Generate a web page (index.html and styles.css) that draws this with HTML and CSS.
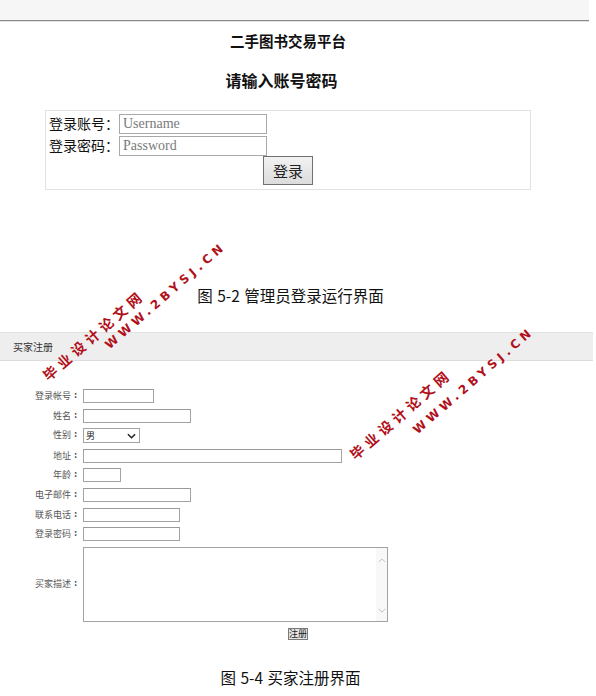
FILE: index.html
```html
<!DOCTYPE html>
<html lang="zh-CN">
<head>
<meta charset="utf-8">
<title>二手图书交易平台</title>
<link rel="stylesheet" href="styles.css">
</head>
<body>
<div class="topbar"></div>
<section class="admin">
  <h1 class="site-title">二手图书交易平台</h1>
  <h2 class="login-title">请输入账号密码</h2>
  <div class="login-box">
    <div class="login-row">
      <span class="login-label">登录账号：</span>
      <input class="login-input" type="text" placeholder="Username">
    </div>
    <div class="login-row">
      <span class="login-label">登录密码：</span>
      <input class="login-input" type="password" placeholder="Password">
    </div>
    <div class="login-btn-row">
      <button class="login-btn" type="button">登录</button>
    </div>
  </div>
</section>
<p class="caption caption-1">图 5-2 管理员登录运行界面</p>

<div class="reg-header">买家注册</div>
<div class="reg-form">
  <label class="reg-label">登录帐号<span class="colon">:</span></label><div class="reg-field"><span class="reg-input w-71"></span></div>
  <label class="reg-label">姓名<span class="colon">:</span></label><div class="reg-field"><span class="reg-input w-108"></span></div>
  <label class="reg-label">性别<span class="colon">:</span></label>
  <div class="reg-field">
    <span class="reg-select">男<svg class="chev" viewBox="0 0 10 6" width="9" height="6"><path d="M1 1 L5 5 L9 1" fill="none" stroke="#222" stroke-width="1.6"/></svg></span>
  </div>
  <label class="reg-label">地址<span class="colon">:</span></label><div class="reg-field"><span class="reg-input w-259"></span></div>
  <label class="reg-label">年龄<span class="colon">:</span></label><div class="reg-field"><span class="reg-input w-38"></span></div>
  <label class="reg-label">电子邮件<span class="colon">:</span></label><div class="reg-field"><span class="reg-input w-108"></span></div>
  <label class="reg-label">联系电话<span class="colon">:</span></label><div class="reg-field"><span class="reg-input w-97"></span></div>
  <label class="reg-label">登录密码<span class="colon">:</span></label><div class="reg-field"><span class="reg-input w-97"></span></div>
  <label class="reg-label reg-label-ta">买家描述<span class="colon">:</span></label>
  <div class="reg-field">
    <div class="reg-textarea">
      <div class="ta-body"></div>
      <div class="ta-scroll">
        <svg viewBox="0 0 10 6" width="8" height="5"><path d="M1 5 L5 1 L9 5" fill="none" stroke="#b8b8b8" stroke-width="1"/></svg>
        <svg viewBox="0 0 10 6" width="8" height="5"><path d="M1 1 L5 5 L9 1" fill="none" stroke="#b8b8b8" stroke-width="1"/></svg>
      </div>
    </div>
  </div>
</div>
<div class="reg-btn-row"><button class="reg-btn" type="button">注册</button></div>
<p class="caption caption-2">图 5-4 买家注册界面</p>

<div class="wm wm-cn wm1a">毕业设计论文网</div>
<div class="wm wm-en wm1b">WWW.2BYSJ.CN</div>
<div class="wm wm-cn wm2a">毕业设计论文网</div>
<div class="wm wm-en wm2b">WWW.2BYSJ.CN</div>
</body>
</html>
```

FILE: styles.css
```css
* { box-sizing: border-box; }
html, body { margin: 0; padding: 0; background: #fff; }
body {
  width: 596px;
  height: 696px;
  position: relative;
  overflow: hidden;
  font-family: "Noto Sans CJK SC", "DejaVu Sans", sans-serif;
  color: #111;
}

.topbar {
  width: 589px;
  height: 21px;
  background: #f6f6f6;
  border-bottom: 1px solid #8a8a8a;
  box-shadow: 0 1px 0 #e2e2e2;
}

.admin { width: 576px; }
.site-title {
  margin: 10px 0 0;
  font-size: 14.5px;
  line-height: 20px;
  font-weight: 600;
  text-align: center;
}
.login-title {
  margin: 19px 0 0;
  padding-right: 13px;
  font-size: 16px;
  line-height: 20px;
  font-weight: 700;
  text-align: center;
}

.login-box {
  margin: 20px 0 0 45px;
  width: 486px;
  height: 80px;
  border: 1px solid #e3e3e3;
  padding: 3px 0 0 3px;
  display: flex;
  flex-direction: column;
}
.login-row {
  display: flex;
  align-items: center;
  height: 19px;
  margin-bottom: 3px;
}
.login-row + .login-row { margin-bottom: 1px; }
.login-label {
  width: 70px;
  font-size: 14px;
  line-height: 19px;
  color: #111;
  white-space: nowrap;
}
.login-input {
  width: 148px;
  height: 20px;
  border: 1px solid #a9a9a9;
  padding: 0 3px;
  margin: 0;
  font-family: "Liberation Serif", serif;
  font-size: 14px;
  background: #fff;
}
.login-input::placeholder { color: #7a7a7a; }
.login-btn-row {
  display: flex;
  justify-content: center;
  padding-right: 3px;
}
.login-btn {
  width: 50px;
  height: 29px;
  margin: 0;
  padding: 0;
  border: 1px solid #707070;
  background: linear-gradient(#f2f2f2, #dcdcdc);
  font-family: "Noto Sans CJK SC", sans-serif;
  font-size: 15px;
  color: #222;
}

.caption {
  margin: 0;
  width: 581px;
  text-align: center;
  font-size: 15.5px;
  line-height: 20px;
  color: #111;
  font-weight: 400;
  word-spacing: 1px;
}
.caption-1 { margin-top: 95px; }
.caption-2 { margin-top: 27px; }

.reg-header {
  margin-top: 27px;
  width: 593px;
  height: 29px;
  background: #eeeeee;
  border-top: 1px solid #e2e2e2;
  border-bottom: 1px solid #dcdcdc;
  padding-left: 13px;
  font-size: 10px;
  line-height: 27px;
  color: #333;
}

.reg-form {
  margin-top: 28px;
  display: grid;
  grid-template-columns: 80px auto;
  column-gap: 3px;
  row-gap: 5.6px;
  align-items: start;
}
.reg-label {
  display: block;
  height: 14px;
  overflow: hidden;
  text-align: right;
  font-size: 9px;
  line-height: 14px;
  color: #555;
  white-space: nowrap;
}
.colon {
  display: inline-block;
  vertical-align: top;
  width: 9px;
  height: 14px;
  line-height: 14px;
  text-align: center;
  font-family: "DejaVu Sans", sans-serif;
  font-weight: 700;
  font-size: 8px;
}
.reg-label-ta {
  align-self: center;
}
.reg-field { display: flex; }

.reg-input {
  display: block;
  height: 14px;
  border: 1px solid #a3a3a3;
  border-top-color: #9a9a9a;
  background: #fff;
}
.w-38 { width: 38px; }
.w-71 { width: 71px; }
.w-97 { width: 97px; }
.w-108 { width: 108px; }
.w-259 { width: 259px; }

.reg-select {
  display: flex;
  align-items: center;
  justify-content: space-between;
  width: 57px;
  height: 15px;
  border: 1px solid #a3a3a3;
  padding: 0 3px 0 2px;
  font-size: 9px;
  color: #222;
  background: #fff;
}
.chev { display: block; }

.reg-textarea {
  width: 305px;
  height: 75px;
  border: 1px solid #a3a3a3;
  display: flex;
  background: #fff;
}
.ta-body { flex: 1; }
.ta-scroll {
  width: 11px;
  background: #f8f8f8;
  display: flex;
  flex-direction: column;
  justify-content: space-between;
  align-items: center;
  padding: 10px 0 8px;
}
.ta-scroll svg { display: block; }

.reg-btn-row {
  display: flex;
  justify-content: center;
  margin-top: 6px;
}
.reg-btn {
  width: 20px;
  height: 12px;
  margin: 0;
  padding: 0;
  border: 1px solid #7a7a7a;
  background: #e4e4e4;
  font-family: "Noto Sans CJK SC", sans-serif;
  font-size: 9px;
  line-height: 10px;
  color: #222;
}

.wm {
  position: absolute;
  transform-origin: 0 0;
  transform: rotate(-41deg);
  color: #b0101a;
  font-weight: 700;
  white-space: nowrap;
  text-shadow: 0 0 1px #fff;
}
.wm-cn {
  font-family: "Noto Sans CJK SC", sans-serif;
  font-size: 14px;
  line-height: 14px;
  letter-spacing: 4.5px;
}
.wm-en {
  font-family: "DejaVu Sans", sans-serif;
  font-size: 12px;
  line-height: 12px;
  letter-spacing: 4.2px;
}
.wm1a { left: 40px; top: 372px; }
.wm1b { left: 103px; top: 342px; }
.wm2a { left: 347px; top: 451px; }
.wm2b { left: 411px; top: 427px; }
```
